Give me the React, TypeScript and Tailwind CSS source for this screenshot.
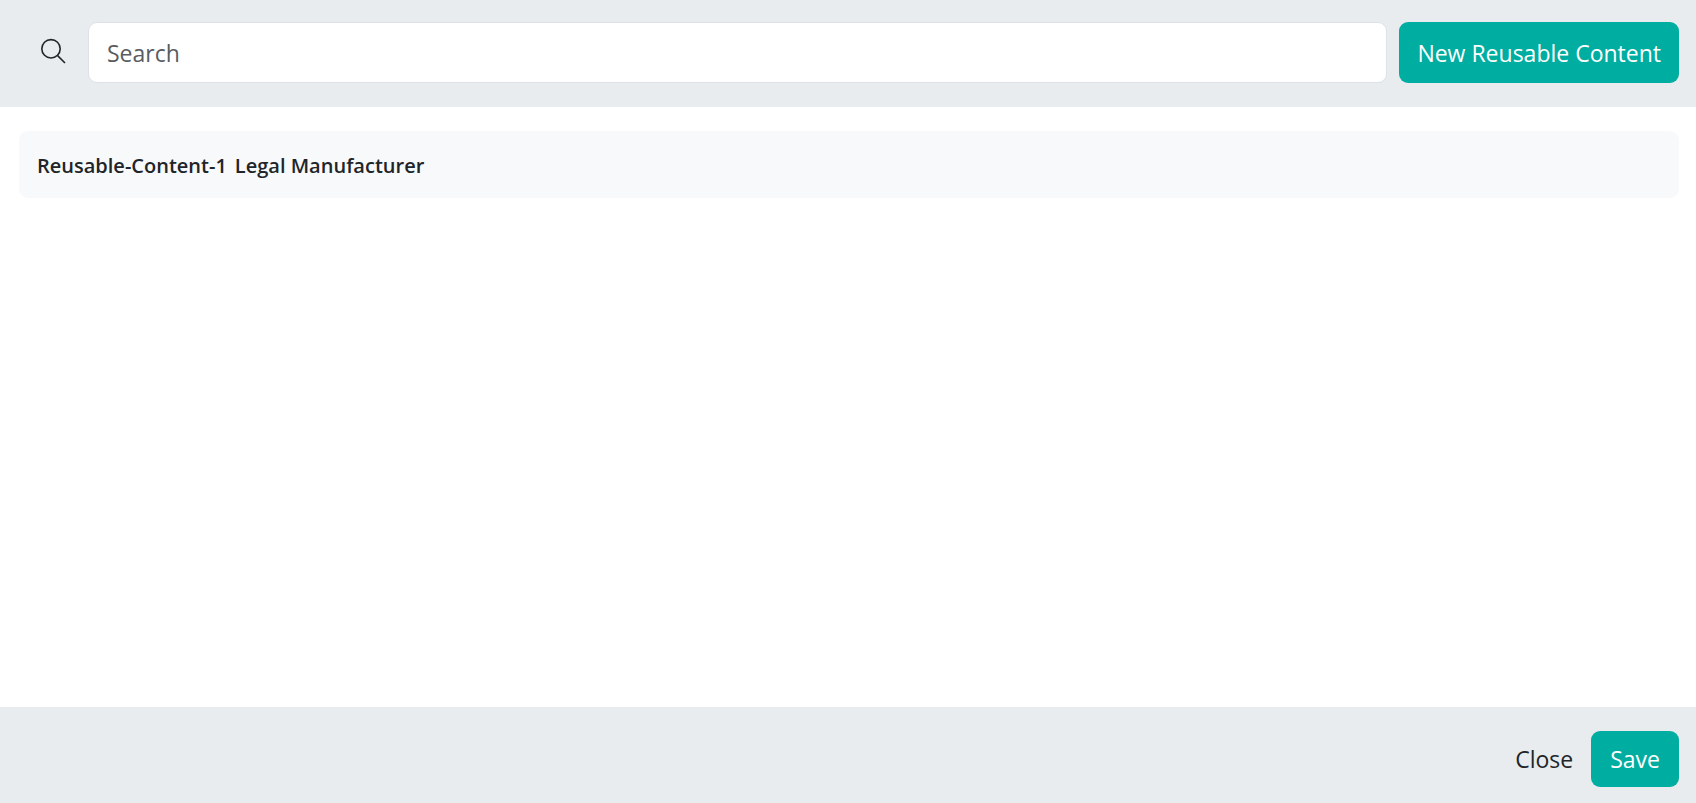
import { useState } from "react";

const items = [{ id: "Reusable-Content-1", title: "Legal Manufacturer" }];

function SearchIcon() {
  return (
    <svg
      viewBox="0 0 24 24"
      className="h-6 w-6 overflow-visible"
      fill="none"
      stroke="currentColor"
      strokeWidth="1.6"
      aria-hidden="true"
    >
      <circle cx="10" cy="9.8" r="9.2" />
      <path d="M16.6 16.6 24 24" />
    </svg>
  );
}

export default function App() {
  const [query, setQuery] = useState("");

  const visible = items.filter((item) =>
    `${item.id} ${item.title}`.toLowerCase().includes(query.toLowerCase())
  );

  return (
    <div className="flex min-h-screen flex-col bg-white font-['Open_Sans',sans-serif] text-[#212529]">
      <header className="flex items-center gap-3 bg-[#e8ecef] pt-[22px] pr-[17px] pb-6 pl-[41px]">
        <label htmlFor="search" className="shrink-0 pr-[11px] pb-1">
          <SearchIcon />
        </label>
        <input
          id="search"
          type="search"
          aria-label="Search"
          placeholder="Search"
          value={query}
          onChange={(e) => setQuery(e.target.value)}
          className="h-[61px] min-w-0 flex-1 rounded-[9px] border border-[#dee2e6] bg-white px-[18px] text-[23px] placeholder:text-[#595c5f]"
        />
        <button type="button" className="h-[61px] shrink-0 rounded-[9px] bg-[#00ada1] px-[18px] pt-0.5 text-[23px] text-white">
          New Reusable Content
        </button>
      </header>

      <main className="flex-1 pt-6 pr-[17px] pl-[19px]">
        <ul className="space-y-3">
          {visible.map((item) => (
            <li
              key={item.id}
              className="flex h-[67px] items-center gap-2 rounded-[9px] bg-[#f8f9fb] px-[18px] pt-0.5 text-[20px] font-semibold"
            >
              <span>{item.id}</span>
              <span>{item.title}</span>
            </li>
          ))}
        </ul>
      </main>

      <footer className="flex items-center justify-end gap-[18px] bg-[#e8ecef] pt-6 pr-[17px] pb-4 text-[23px]">
        <button type="button">Close</button>
        <button type="button" className="h-14 rounded-[9px] bg-[#00ada1] px-[19px] text-white">
          Save
        </button>
      </footer>
    </div>
  );
}
